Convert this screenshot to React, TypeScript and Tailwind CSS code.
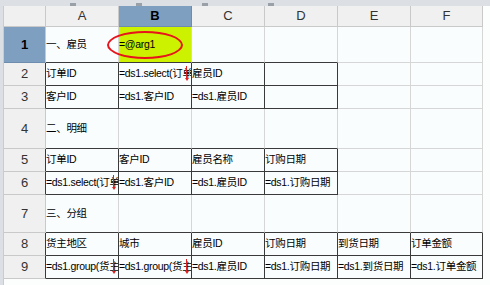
import React from "react";

const COLS = ["A", "B", "C", "D", "E", "F"];
const COL_W = [73, 73, 73, 73, 73, 72];
const ROW_H = [36, 23, 23, 40, 23, 23, 38, 23, 23];

// cell text, indexed [row][col]
const DATA: Record<string, string> = {
  "0-0": "一、雇员",
  "0-1": "=@arg1",
  "1-0": "订单ID",
  "1-1": "=ds1.select(订单",
  "1-2": "雇员ID",
  "2-0": "客户ID",
  "2-1": "=ds1.客户ID",
  "2-2": "=ds1.雇员ID",
  "3-0": "二、明细",
  "4-0": "订单ID",
  "4-1": "客户ID",
  "4-2": "雇员名称",
  "4-3": "订购日期",
  "5-0": "=ds1.select(订单",
  "5-1": "=ds1.客户ID",
  "5-2": "=ds1.雇员ID",
  "5-3": "=ds1.订购日期",
  "6-0": "三、分组",
  "7-0": "货主地区",
  "7-1": "城市",
  "7-2": "雇员ID",
  "7-3": "订购日期",
  "7-4": "到货日期",
  "7-5": "订单金额",
  "8-0": "=ds1.group(货主",
  "8-1": "=ds1.group(货主",
  "8-2": "=ds1.雇员ID",
  "8-3": "=ds1.订购日期",
  "8-4": "=ds1.到货日期",
  "8-5": "=ds1.订单金额",
};

const MARKS = new Set(["1-1", "5-0", "8-0", "8-1"]);

function bordered(r: number, c: number) {
  if (r < 0 || c < 0 || r > 8 || c > 5) return false;
  if ((r === 1 || r === 2 || r === 4 || r === 5) && c <= 3) return true;
  if (r === 7 || r === 8) return true;
  return false;
}

const font = { fontFamily: '"Liberation Sans", "Noto Sans CJK SC", sans-serif' };

function Cell({ r, c }: { r: number; c: number }) {
  const key = `${r}-${c}`;
  const text = DATA[key];
  const darkR = bordered(r, c) || bordered(r, c + 1);
  const darkB = bordered(r, c) || bordered(r + 1, c);
  const yellow = key === "0-1";
  return (
    <div
      className={`relative border-r border-b ${darkR ? "border-r-[#3a3a3a]" : "border-r-[#d6d6d6]"} ${
        darkB ? "border-b-[#3a3a3a]" : "border-b-[#d6d6d6]"
      } ${yellow ? "bg-[#ccf200]" : "bg-[#fafdfd]"}`}
      style={{ width: COL_W[c], height: ROW_H[r] }}
    >
      <div className="flex h-full items-center overflow-hidden whitespace-nowrap text-[10.5px] tracking-[-0.3px] text-black">
        {text}
      </div>
      {MARKS.has(key) && (
        <div className="absolute right-[2px] top-[3px] flex h-[15px] w-[5px] flex-col items-center">
          <div className="h-[12px] w-px bg-[#e02020]" />
          <div className="h-0 w-0 border-x-[2px] border-t-[3px] border-x-transparent border-t-[#e02020]" />
        </div>
      )}
      {key === "1-1" && <div className="absolute right-[1px] top-[7px] h-[6px] w-px bg-[#30c8e0]" />}
      {yellow && (
        <div className="pointer-events-none absolute left-[-12px] top-[4px] z-10 h-[28px] w-[76px] rounded-[50%] border-2 border-[#e8141c]" />
      )}
    </div>
  );
}

export default function App() {
  return (
    <div className="h-[285px] w-[490px] overflow-hidden bg-[#fcfdfd]" style={font}>
      <div className="flex h-[6px] items-end gap-[60px] bg-[#dcdfe4] pl-[70px]">
        <div className="h-[3px] w-[6px] bg-[#9aa0a8]" />
        <div className="h-[3px] w-[6px] bg-[#9aa0a8]" />
        <div className="h-[3px] w-[6px] bg-[#9aa0a8]" />
        <div className="h-[3px] w-[6px] bg-[#9aa0a8]" />
      </div>
      <div className="flex">
        <div className="h-[279px] w-[4px] shrink-0 border-r border-r-[#c8ccd2] bg-[#dcdfe4]" />
        <div className="flex flex-col">
          <div className="flex">
            <div className="h-[21px] w-[42px] border-r border-b border-[#c9c9c9] bg-[#f0f0f0]" />
            {COLS.map((name, c) => (
              <div
                key={name}
                className={`flex h-[21px] items-center justify-center border-r border-b text-[13px] ${
                  c === 1
                    ? "border-[#6d8cae] bg-[#7f9fc0] font-bold text-black"
                    : "border-[#c9c9c9] bg-[#f0f0f0] text-[#333]"
                }`}
                style={{ width: COL_W[c] }}
              >
                {name}
              </div>
            ))}
          </div>
          {ROW_H.map((h, r) => (
            <div key={r} className="flex">
              <div
                className={`flex w-[42px] items-center justify-center border-b text-[13px] ${
                  bordered(r, 0) ? "border-r border-r-[#3a3a3a]" : "border-r border-r-[#c9c9c9]"
                } ${
                  r === 0
                    ? "border-b-[#6d8cae] bg-[#7f9fc0] font-bold text-black"
                    : "border-b-[#c9c9c9] bg-[#f0f0f0] text-[#333]"
                }`}
                style={{ height: h }}
              >
                {r + 1}
              </div>
              {COLS.map((_, c) => (
                <Cell key={c} r={r} c={c} />
              ))}
            </div>
          ))}
        </div>
      </div>
    </div>
  );
}
